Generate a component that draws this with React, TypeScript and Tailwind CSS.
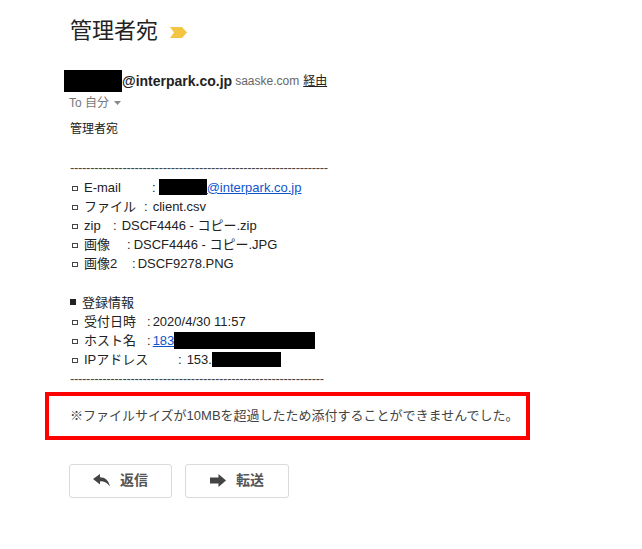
import React from "react";

const Box = () => (
  <span className="inline-block w-[6px] h-[5px] border border-[#444] ml-[2px] mr-[6px] relative top-[1px]" />
);

const Black = ({ w, h = 16 }: { w: number; h?: number }) => (
  <span className="inline-block bg-black" style={{ width: w, height: h }} />
);

const Row = ({ children }: { children: React.ReactNode }) => (
  <div className="h-[19.2px] leading-[19.2px] whitespace-pre flex items-center">{children}</div>
);

export default function App() {
  return (
    <div
      className="w-[642px] h-[549px] bg-white text-[#222] overflow-hidden"
      style={{ fontFamily: '"Liberation Sans", Arial, "Noto Sans CJK JP", sans-serif' }}
    >
      <div className="pl-[70px] pt-[16px] flex items-center h-[30px] box-content">
        <span className="text-[22px] leading-[30px] text-[#222]">管理者宛</span>
        <svg className="ml-[12px] mt-[2px]" width="18" height="11" viewBox="0 0 18 11">
          <path d="M0 0 H12 L17 5.5 L12 11 H0 L4 5.5 Z" fill="#f4c542" />
        </svg>
      </div>

      <div className="pl-[64px] mt-[24px] flex items-center h-[22px]">
        <Black w={58} h={22} />
        <span className="font-bold text-[14px] text-[#222]">@interpark.co.jp</span>
        <span className="ml-[3px] text-[12px] text-[#666]">saaske.com</span>
        <span className="ml-[4px] text-[12px] text-[#222] underline">経由</span>
      </div>

      <div className="pl-[69px] mt-[2px] flex items-center h-[17px] text-[12px] text-[#777]">
        <span>To 自分</span>
        <svg className="ml-[5px]" width="7" height="4" viewBox="0 0 7 4">
          <path d="M0 0 H7 L3.5 4 Z" fill="#888" />
        </svg>
      </div>

      <div className="pl-[70px] mt-[9px] text-[13px] text-[#222]">
        <Row>
          <span className="text-[12px]">管理者宛</span>
        </Row>
        <Row> </Row>
        <Row>
          <span className="tracking-[-0.3px] text-[#444]">
            ----------------------------------------------------------------
          </span>
        </Row>
        <Row>
          <Box />
          <span className="inline-block w-[68px]">E-mail</span>
          <span>:</span>
          <span className="ml-[3px] flex items-center">
            <Black w={48} />
          </span>
          <span className="text-[#1155cc] underline">@interpark.co.jp</span>
        </Row>
        <Row>
          <Box />
          <span className="inline-block w-[60px]">ファイル</span>
          <span>:</span>
          <span className="ml-[5px]">client.csv</span>
        </Row>
        <Row>
          <Box />
          <span className="inline-block w-[29px]">zip</span>
          <span>:</span>
          <span className="ml-[5px]">DSCF4446 - コピー.zip</span>
        </Row>
        <Row>
          <Box />
          <span className="inline-block w-[43px]">画像</span>
          <span>:</span>
          <span className="ml-[3px]">DSCF4446 - コピー.JPG</span>
        </Row>
        <Row>
          <Box />
          <span className="inline-block w-[48px]">画像2</span>
          <span>:</span>
          <span className="ml-[2px]">DSCF9278.PNG</span>
        </Row>
        <Row> </Row>
        <Row>
          <span className="inline-block w-[6px] h-[6px] bg-[#222] mr-[6px]" />
          <span>登録情報</span>
        </Row>
        <Row>
          <Box />
          <span className="inline-block w-[63px]">受付日時</span>
          <span>:</span>
          <span className="ml-[2px]">2020/4/30 11:57</span>
        </Row>
        <Row>
          <Box />
          <span className="inline-block w-[63px]">ホスト名</span>
          <span>:</span>
          <span className="ml-[2px] text-[#1155cc] underline">183</span>
          <Black w={141} h={17} />
        </Row>
        <Row>
          <Box />
          <span className="inline-block w-[94px]">IPアドレス</span>
          <span>:</span>
          <span className="ml-[5px]">153.</span>
          <Black w={69} h={15} />
        </Row>
        <Row>
          <span className="tracking-[-0.3px] text-[#444]">
            ---------------------------------------------------------------
          </span>
        </Row>
      </div>

      <div className="ml-[45px] mt-[3px] w-[485px] h-[48px] border-[4px] border-[#ff0000] flex items-center pl-[21px]">
        <span className="text-[13px] text-[#444]">
          ※ファイルサイズが10MBを超過したため添付することができませんでした。
        </span>
      </div>

      <div className="pl-[69px] mt-[24px] flex gap-[13px]">
        <div className="w-[103px] h-[34px] border border-[#dadada] rounded-[3px] flex items-center justify-center gap-[10px]">
          <svg width="17" height="13" viewBox="0 0 17 13">
            <path d="M0 5 L7 0 V3.2 C12 3.2 15.5 6 17 12.5 C14.5 9 11.5 7.2 7 7.2 V10.5 Z" fill="#444" />
          </svg>
          <span className="text-[14px] font-bold text-[#555]">返信</span>
        </div>
        <div className="w-[104px] h-[34px] border border-[#dadada] rounded-[3px] flex items-center justify-center gap-[10px]">
          <svg width="16" height="13" viewBox="0 0 16 13">
            <path d="M0 3.5 H8.5 V0 L16 6.5 L8.5 13 V9.5 H0 Z" fill="#444" />
          </svg>
          <span className="text-[14px] font-bold text-[#555]">転送</span>
        </div>
      </div>
    </div>
  );
}
